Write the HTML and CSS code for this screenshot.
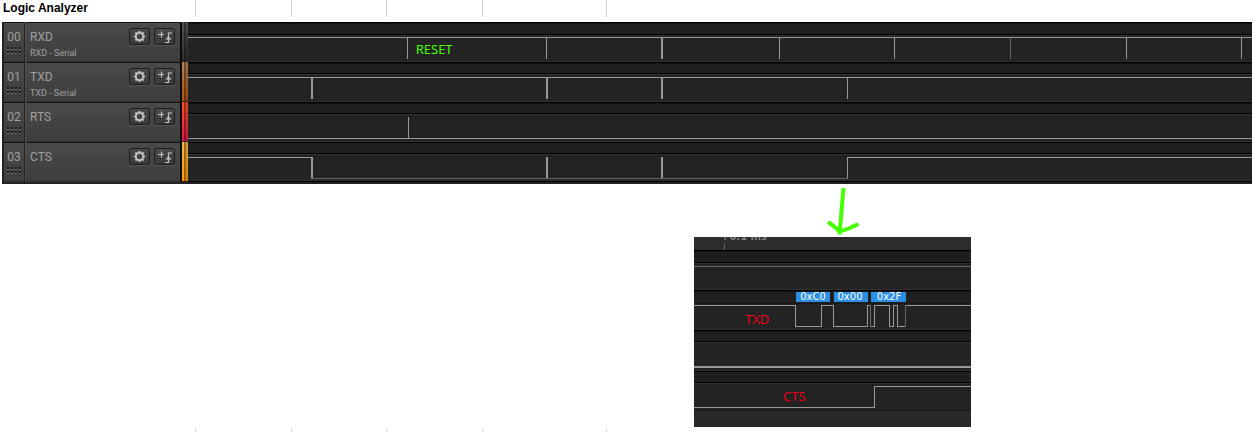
FILE: index.html
```html
<!DOCTYPE html>
<html lang="en">
<head>
<meta charset="utf-8">
<title>Logic Analyzer</title>
<link rel="stylesheet" href="styles.css">
</head>
<body>
<svg class="defs" width="0" height="0" aria-hidden="true">
  <symbol id="gear" viewBox="0 0 14 14">
    <circle cx="7" cy="7" r="3.900" fill="none" stroke="currentColor" stroke-width="2"/>
    <path d="M7 1v2M7 11v2M1 7h2M11 7h2M2.600 2.600l1.600 1.600M9.800 9.800l1.600 1.600M11.400 2.600L9.800 4.200M4.200 9.800l-1.600 1.600" stroke="currentColor" stroke-width="2.200" fill="none"/>
  </symbol>
  <symbol id="trigger" viewBox="0 0 16 14">
    <path d="M1 4.500h6M4.500 1.500v6M8 12.500h3.500v-9.500H15" stroke="currentColor" stroke-width="1.200" fill="none"/>
    <path d="M8.500 9.500L11.500 6L14.500 9.500z" fill="currentColor"/>
  </symbol>
  <symbol id="grip" viewBox="0 0 14 7">
    <path d="M0 1h2M4 1h2M8 1h2M12 1h2M0 5h2M4 5h2M8 5h2M12 5h2" stroke="#1d1d1d" stroke-width="2"/>
    <path d="M0 2.500h2M4 2.500h2M8 2.500h2M12 2.500h2M0 6.500h2M4 6.500h2M8 6.500h2M12 6.500h2" stroke="#6c6c6c" stroke-width="1"/>
  </symbol>
</svg>

<header class="sheet-row">
  <h1 class="cell title">Logic Analyzer</h1>
  <span class="cell"></span><span class="cell"></span><span class="cell"></span><span class="cell"></span>
</header>

<main>
  <section class="analyzer" aria-label="Channels">
    <div class="channel first">
      <div class="number">00<svg class="grip"><use href="#grip"/></svg></div>
      <div class="name">RXD<small>RXD - Serial</small></div>
      <div class="tools">
        <button type="button" aria-label="RXD settings"><svg class="gear"><use href="#gear"/></svg></button>
        <button type="button" aria-label="RXD trigger"><svg class="trigger"><use href="#trigger"/></svg></button>
      </div>
      <div class="stripe black"></div>
      <div class="trace">
        <svg class="wave" viewBox="0 0 1064 40" preserveAspectRatio="none">
          <path d="M0 15h1064v1H0zM219 15h1v22h-1zM358 15h1v22h-1zM473 15h2v22h-2zM591 15h1v22h-1zM706 15h1v22h-1zM938 15h1v22h-1zM1053 15h1v22h-1z"/>
          <path class="dim" d="M822 16h1v21h-1z"/>
        </svg>
        <span class="note">RESET</span>
      </div>
    </div>
    <div class="channel">
      <div class="number">01<svg class="grip"><use href="#grip"/></svg></div>
      <div class="name">TXD<small>TXD - Serial</small></div>
      <div class="tools">
        <button type="button" aria-label="TXD settings"><svg class="gear"><use href="#gear"/></svg></button>
        <button type="button" aria-label="TXD trigger"><svg class="trigger"><use href="#trigger"/></svg></button>
      </div>
      <div class="stripe brown"></div>
      <div class="trace">
        <svg class="wave" viewBox="0 0 1064 40" preserveAspectRatio="none">
          <path d="M0 15h1064v1H0zM123 15h2v22h-2zM358 15h2v22h-2zM473 15h2v22h-2zM659 15h1v22h-1z"/>
        </svg>
      </div>
    </div>
    <div class="channel">
      <div class="number">02<svg class="grip"><use href="#grip"/></svg></div>
      <div class="name">RTS</div>
      <div class="tools">
        <button type="button" aria-label="RTS settings"><svg class="gear"><use href="#gear"/></svg></button>
        <button type="button" aria-label="RTS trigger"><svg class="trigger"><use href="#trigger"/></svg></button>
      </div>
      <div class="stripe red"></div>
      <div class="trace">
        <svg class="wave" viewBox="0 0 1064 40" preserveAspectRatio="none">
          <path d="M0 36h1064v1H0zM220 15h1v21h-1z"/>
        </svg>
      </div>
    </div>
    <div class="channel">
      <div class="number">03<svg class="grip"><use href="#grip"/></svg></div>
      <div class="name">CTS</div>
      <div class="tools">
        <button type="button" aria-label="CTS settings"><svg class="gear"><use href="#gear"/></svg></button>
        <button type="button" aria-label="CTS trigger"><svg class="trigger"><use href="#trigger"/></svg></button>
      </div>
      <div class="stripe orange"></div>
      <div class="trace">
        <svg class="wave" viewBox="0 0 1064 40" preserveAspectRatio="none">
          <path class="dim" d="M123 36h537v1H123z"/>
          <path d="M0 15h125v21h-2V16H0zM358 15h2v21h-2zM473 15h2v21h-2zM659 15h405v1H660v20h-1z"/>
        </svg>
      </div>
    </div>
  </section>

  <figure class="detail">
    <svg class="arrow" width="277" height="53" viewBox="0 0 277 53" aria-hidden="true">
      <path d="M149.500 4Q147.500 28 145.500 50.500M134 38Q139 41 145.500 47.500Q155 45 164.500 40" fill="none" stroke="#45ff00" stroke-width="4"/>
    </svg>
    <svg class="inset" width="277" height="190" viewBox="0 0 277 190" role="img" aria-label="TXD and CTS detail">
      <rect width="277" height="190" fill="#232323"/>
      <rect width="277" height="13" fill="#2c2c2c"/>
      <text class="time" x="27" y="3">+0.1 ms</text>
      <path class="dim" d="M30 6h1v7h-1z"/>
      <path fill="#1f1f1f" d="M0 15h277v10H0zM0 55h277v12H0zM0 95h277v9H0zM0 135h277v10H0z"/>
      <path fill="#000" d="M0 13h277v1H0zM0 25h277v1H0zM0 53h277v1H0zM0 93h277v1H0zM0 104h277v1H0zM0 134h277v1H0zM0 145h277v1H0z"/>
      <path fill="#141414" d="M0 14h277v1H0zM0 54h277v1H0zM0 94h277v1H0z"/>
      <path fill="#323232" d="M0 26h277v1H0zM0 52h277v1H0zM0 92h277v1H0zM0 105h277v1H0zM0 133h277v1H0zM0 146h277v1H0z"/>
      <path fill="#191919" d="M0 66h277v1H0zM0 173h277v1H0z"/>
      <rect y="174" width="277" height="16" fill="#282828"/>
      <path class="dim" d="M0 29h277v1H0z"/>
      <path class="line" d="M0 68.500H101.500V89.500H127.500V68.500H139.500V89.500H173.500V68.500H176.500M176.500 89.500H180.500V68.500H195.500V89.500H199.500V68.500H203.500V89.500H211.500M211.500 68.500H277"/>
      <path class="dim" d="M176 68h1v22h-1zM211 68h1v22h-1z"/>
      <path fill="#999" d="M0 129h277v2H0z"/>
      <path class="line" d="M0 170.500H180.500V149.500H277"/>
      <path fill="#2c8fe3" d="M102 55h34v10h-34zM140 55h34v10h-34zM177 55h35v10h-35z"/>
      <text class="byte" x="119" y="63">0xC0</text>
      <text class="byte" x="156" y="63">0x00</text>
      <text class="byte" x="195" y="63">0x2F</text>
      <text class="label" x="51" y="87">TXD</text>
      <text class="label" x="89" y="164">CTS</text>
    </svg>
  </figure>
</main>

<div class="sheet-row next" aria-hidden="true">
  <span class="cell"></span><span class="cell"></span><span class="cell"></span><span class="cell"></span><span class="cell"></span>
</div>
</body>
</html>
```
FILE: styles.css
```css
* { box-sizing: border-box; }

body {
  margin: 0;
  background: #fff;
  font-family: Roboto, "Liberation Sans", sans-serif;
}

.defs { position: absolute; }

.sheet-row {
  display: grid;
  grid-template-columns: 196px 96px 95px 96px 124px;
  height: 17px;
}

.cell { border-right: 1px solid #d0d0d0; }

.title {
  margin: 0;
  padding-left: 3px;
  font: bold 12px/17px "Liberation Sans", Arial, sans-serif;
  color: #000;
}

.next { height: 3px; margin-top: 2px; }

.analyzer {
  margin: 5px 3px 0 2px;
  padding: 0 0 2px 2px;
  background: #222;
}

.channel {
  display: grid;
  grid-template-columns: 20px 102px 54px 8px minmax(0, 1fr);
  height: 40px;
  color: #a0a0a0;
  font-size: 12px;
  line-height: 14px;
  background: linear-gradient(#111 1px, #505050 1px, #4a4a4a 2px, #3d3d3d 39px, #333 39px);
}

.number {
  display: flex;
  flex-direction: column;
  align-items: center;
  gap: 3px;
  padding-top: 8px;
}

.grip { width: 14px; height: 7px; }

.name {
  padding: 8px 0 0 5px;
  border-left: 1px solid #222;
  box-shadow: inset 1px 0 #505050;
}

.name small {
  display: block;
  margin-top: 3px;
  font-size: 9px;
  line-height: 12px;
}

.tools {
  display: flex;
  align-items: flex-start;
  gap: 4px;
  padding: 6px 0 0 3px;
}

.tools button {
  display: flex;
  align-items: center;
  justify-content: center;
  width: 21px;
  height: 17px;
  padding: 0;
  border: 1px solid #1c1c1c;
  border-radius: 2px;
  background: linear-gradient(#4a4a4a, #383838);
  box-shadow: 0 1px #555;
  color: #c4c4c4;
}

.gear { width: 13px; height: 13px; }
.trigger { width: 16px; height: 14px; }

.stripe {
  border-left: 2px solid #0a0a0a;
  border-bottom: 1px solid #222;
  background: linear-gradient(90deg, transparent 2px, #0007 2px, #0005 4px, #0002 4px), linear-gradient(var(--top), var(--bottom));
}

.black { --top: #555; --bottom: #2c2c2c; }
.brown { --top: #b5835b; --bottom: #a9520f; }
.red { --top: #ff5527; --bottom: #e01546; }
.orange { --top: #f5b645; --bottom: #ff9800; }

.trace {
  position: relative;
  background: linear-gradient(#000 1px, #111 1px 2px, #1f1f1f 2px 11px, #000 11px 12px, #303030 12px 13px, #232323 13px 39px, #303030 39px);
}

.first .trace {
  background: linear-gradient(#000 1px, #111 1px 2px, #1f1f1f 2px 12px, #000 12px 13px, #303030 13px 14px, #232323 14px 39px, #303030 39px);
}

.channel:last-child .trace {
  background: linear-gradient(#000 1px, #1f1f1f 1px 11px, #000 11px 12px, #303030 12px 13px, #232323 13px 38px, #303030 38px 39px, #000 39px);
}

.wave {
  display: block;
  width: 100%;
  height: 40px;
  fill: #999;
}

.wave, .inset { shape-rendering: crispEdges; }

.dim { fill: #666; }

.line { fill: none; stroke: #999; stroke-width: 1; }

.note {
  position: absolute;
  left: 21.400%;
  top: 18px;
  color: #45ff00;
  font: 13px/18px "Noto Sans", sans-serif;
}

.detail { margin: 0 0 0 694px; }

.detail svg { display: block; }

.time { fill: #808080; font: bold 10px "DejaVu Sans", sans-serif; }

.byte { fill: #fff; font: 10px "DejaVu Sans", sans-serif; text-anchor: middle; }

.label { fill: #f00014; font: 13px "Noto Sans", sans-serif; }
```
